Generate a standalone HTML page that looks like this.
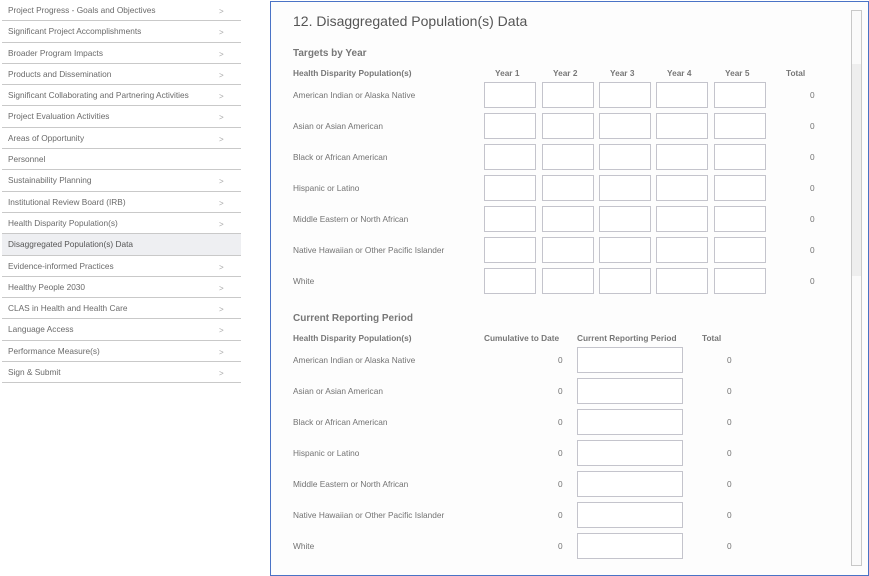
<!DOCTYPE html>
<html><head><meta charset="utf-8"><style>
*{margin:0;padding:0;box-sizing:border-box}
body{width:869px;height:576px;background:#fff;font-family:"Liberation Sans",sans-serif;color:#6b6b6b;position:relative;overflow:hidden}
.side{position:absolute;left:2px;top:0;width:239px}
.it{height:21.3px;border-bottom:1px solid #c9c9c9;font-size:8.3px;line-height:21px;padding-left:6px;position:relative;color:#6a6a6a}
.it span{position:absolute;left:217px;top:1px;color:#aaa;font-size:8px}
.it.act{background:#eeeff2;color:#555}
.panel{position:absolute;left:270px;top:1px;width:599px;height:575px;border:1px solid #4a73c6;background:#fdfdfd}
.a{position:absolute;white-space:nowrap}
.t{font-size:8.3px;color:#737373}
.h{font-size:8.3px;font-weight:bold;color:#777}
.inp{position:absolute;border:1px solid #c4c4cc;background:#fff;height:26px}
.sb{position:absolute;left:851px;top:10px;width:11px;height:556px;border:1px solid #c8c8c8;background:#fafafa}
.th{position:absolute;left:852px;top:64px;width:9px;height:212px;background:#eeeeee}
</style></head><body>
<div class="side">
<div class="it">Project Progress - Goals and Objectives<span>&gt;</span></div>
<div class="it">Significant Project Accomplishments<span>&gt;</span></div>
<div class="it">Broader Program Impacts<span>&gt;</span></div>
<div class="it">Products and Dissemination<span>&gt;</span></div>
<div class="it">Significant Collaborating and Partnering Activities<span>&gt;</span></div>
<div class="it">Project Evaluation Activities<span>&gt;</span></div>
<div class="it">Areas of Opportunity<span>&gt;</span></div>
<div class="it">Personnel</div>
<div class="it">Sustainability Planning<span>&gt;</span></div>
<div class="it">Institutional Review Board (IRB)<span>&gt;</span></div>
<div class="it">Health Disparity Population(s)<span>&gt;</span></div>
<div class="it act">Disaggregated Population(s) Data</div>
<div class="it">Evidence-informed Practices<span>&gt;</span></div>
<div class="it">Healthy People 2030<span>&gt;</span></div>
<div class="it">CLAS in Health and Health Care<span>&gt;</span></div>
<div class="it">Language Access<span>&gt;</span></div>
<div class="it">Performance Measure(s)<span>&gt;</span></div>
<div class="it">Sign &amp; Submit<span>&gt;</span></div>
</div>
<div class="panel"></div>
<div class="sb"></div><div class="th"></div>
<div class="a" style="left:293px;top:13px;font-size:14px;color:#555">12. Disaggregated Population(s) Data</div>
<div class="a h" style="left:293px;top:48px;font-size:10px">Targets by Year</div>
<div class="a h" style="left:293px;top:68px">Health Disparity Population(s)</div>
<div class="a h" style="left:495px;top:68px">Year 1</div>
<div class="a h" style="left:553px;top:68px">Year 2</div>
<div class="a h" style="left:610px;top:68px">Year 3</div>
<div class="a h" style="left:667px;top:68px">Year 4</div>
<div class="a h" style="left:725px;top:68px">Year 5</div>
<div class="a h" style="left:786px;top:68px">Total</div>
<div id="r1"></div>
<div class="a h" style="left:293px;top:313px;font-size:10px">Current Reporting Period</div>
<div class="a h" style="left:293px;top:333px">Health Disparity Population(s)</div>
<div class="a h" style="left:484px;top:333px">Cumulative to Date</div>
<div class="a h" style="left:577px;top:333px">Current Reporting Period</div>
<div class="a h" style="left:702px;top:333px">Total</div>
<script>
var n=["American Indian or Alaska Native","Asian or Asian American","Black or African American","Hispanic or Latino","Middle Eastern or North African","Native Hawaiian or Other Pacific Islander","White"];
var h="";
n.forEach(function(s,i){
var y=95+i*31;
h+='<div class="a t" style="left:293px;top:'+(y-5)+'px">'+s+'</div>';
[484,542,599,656,714].forEach(function(x){h+='<div class="inp" style="left:'+x+'px;top:'+(y-13)+'px;width:52px"></div>';});
h+='<div class="a t" style="left:810px;top:'+(y-5)+'px">0</div>';
var y2=360+i*31;
h+='<div class="a t" style="left:293px;top:'+(y2-5)+'px">'+s+'</div>';
h+='<div class="a t" style="left:558px;top:'+(y2-5)+'px">0</div>';
h+='<div class="inp" style="left:577px;top:'+(y2-13)+'px;width:106px"></div>';
h+='<div class="a t" style="left:727px;top:'+(y2-5)+'px">0</div>';
});
document.getElementById("r1").outerHTML=h;
</script>
</body></html>
